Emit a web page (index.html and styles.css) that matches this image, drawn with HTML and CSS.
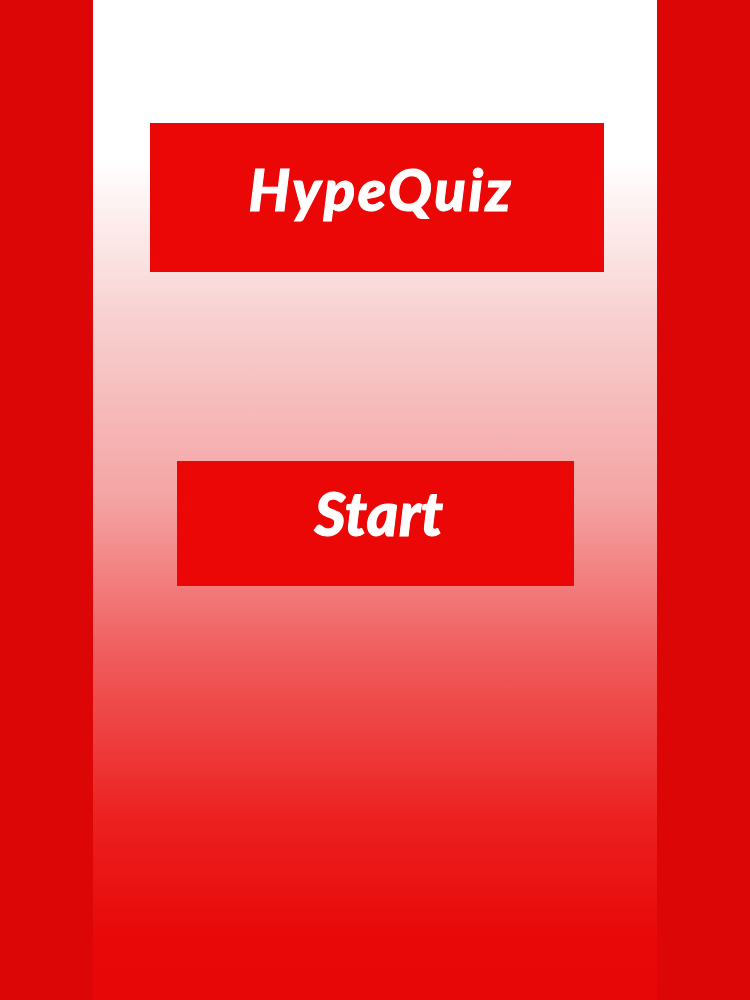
FILE: index.html
```html
<!DOCTYPE html>
<html>
<head>
<meta charset="utf-8">
<link rel="stylesheet" href="styles.css">
</head>
<body>
<div class="page">
  <div class="side"></div>
  <main class="center">
    <div class="title-box"><h1 class="title">HypeQuiz</h1></div>
    <button class="start">Start</button>
  </main>
  <div class="side"></div>
</div>
</body>
</html>
```
FILE: styles.css
```css
html, body {
  margin: 0;
  padding: 0;
}
body {
  width: 750px;
  height: 1000px;
  overflow: hidden;
  font-family: Lato, "Open Sans", "DejaVu Sans", sans-serif;
}
.page {
  display: flex;
  height: 1000px;
}
.side {
  width: 93px;
  flex: none;
  background: #dc0606;
}
.center {
  flex: 1;
  display: flex;
  flex-direction: column;
  align-items: center;
  padding-top: 123px;
  box-sizing: border-box;
  background: linear-gradient(to bottom,
    #ffffff 0%,
    #ffffff 16%,
    #fdeaea 23%,
    #f8d0d0 32%,
    #f5a3a3 50%,
    #f05a5a 66%,
    #ec2020 82%,
    #e80808 94%,
    #e80707 100%);
}
.title-box {
  width: 454px;
  height: 149px;
  margin-left: 4px;
  background: #ec0707;
  display: flex;
  align-items: center;
  justify-content: center;
}
.title {
  margin: 0;
  color: #ffffff;
  font-size: 58px;
  font-weight: 900;
  font-style: italic;
  letter-spacing: 2.5px;
  -webkit-text-stroke: 1px #ffffff;
  padding: 0 0 18px 8px;
}
.start {
  margin-top: 189px;
  width: 397px;
  height: 125px;
  border: none;
  background: #ec0707;
  color: #ffffff;
  font-family: Lato, "Open Sans", "DejaVu Sans", sans-serif;
  font-size: 60px;
  font-weight: 900;
  font-style: italic;
  letter-spacing: 0.5px;
  -webkit-text-stroke: 1px #ffffff;
  padding: 0 0 22px 8px;
}
```
